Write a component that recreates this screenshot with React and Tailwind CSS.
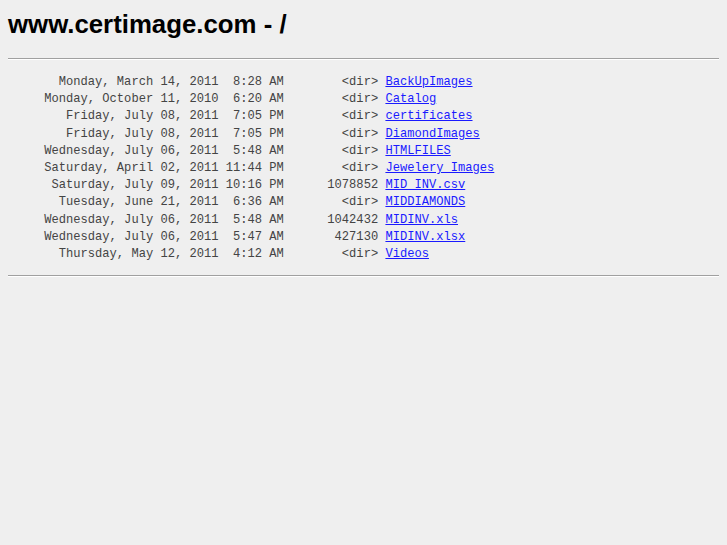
import React from 'react';

const rows = [
  ['Monday, March 14, 2011', ' 8:28 AM', '<dir>', 'BackUpImages'],
  ['Monday, October 11, 2010', ' 6:20 AM', '<dir>', 'Catalog'],
  ['Friday, July 08, 2011', ' 7:05 PM', '<dir>', 'certificates'],
  ['Friday, July 08, 2011', ' 7:05 PM', '<dir>', 'DiamondImages'],
  ['Wednesday, July 06, 2011', ' 5:48 AM', '<dir>', 'HTMLFILES'],
  ['Saturday, April 02, 2011', '11:44 PM', '<dir>', 'Jewelery Images'],
  ['Saturday, July 09, 2011', '10:16 PM', '1078852', 'MID INV.csv'],
  ['Tuesday, June 21, 2011', ' 6:36 AM', '<dir>', 'MIDDIAMONDS'],
  ['Wednesday, July 06, 2011', ' 5:48 AM', '1042432', 'MIDINV.xls'],
  ['Wednesday, July 06, 2011', ' 5:47 AM', '427130', 'MIDINV.xlsx'],
  ['Thursday, May 12, 2011', ' 4:12 AM', '<dir>', 'Videos'],
];

export default function App() {
  return (
    <div className="min-h-screen bg-[#efefef] px-2 pt-[10px]">
      <h1 className="text-[25.8px] leading-[29px] font-bold text-black font-['Liberation_Sans',Arial,sans-serif]">
        www.certimage.com - /
      </h1>
      <div className="mt-[19px] border-t border-t-[#a0a0a0] border-b border-b-white" />
      <pre className="mt-[14px] mb-[12px] text-[12.1px] leading-[17.2px] text-[#444] font-['Liberation_Mono','Courier_New',monospace] whitespace-pre">
        {rows.map(([date, time, size, name]) => (
          <div key={name}>
            {`${date} ${time}`.padStart(38, ' ')}
            {size.padStart(13, ' ')}{' '}
            <a href="#" className="text-[#1a1aff] underline">
              {name}
            </a>
          </div>
        ))}
      </pre>
      <div className="border-t border-t-[#a0a0a0] border-b border-b-white" />
    </div>
  );
}
